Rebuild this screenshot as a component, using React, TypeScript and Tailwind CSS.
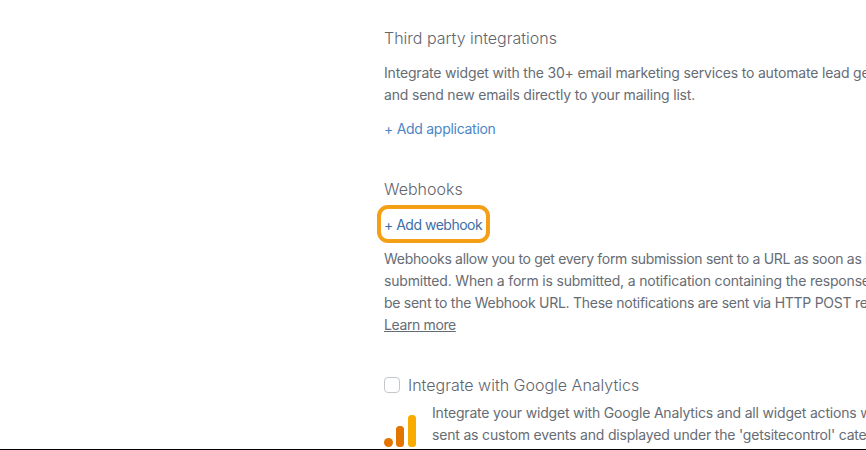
export default function App() {
  return (
    <div className="h-[450px] w-[866px] overflow-hidden bg-white flex flex-col font-['Inter',sans-serif] text-[#666c74] tracking-[-0.18px]">
      <div className="flex-1 overflow-hidden pl-[384px] pt-[28px]">
        {/* Third party integrations */}
        <h2 className="text-[16px] leading-[20px] text-[#5f656d] font-light tracking-normal">Third party integrations</h2>
        <p className="mt-[14px] text-[14px] leading-[22px] whitespace-nowrap">
          Integrate widget with the 30+ email marketing services to automate lead generation
          <br />
          and send new emails directly to your mailing list.
        </p>
        <a className="block mt-[12px] text-[14px] leading-[22px] text-[#4a86c8] tracking-[-0.28px]">+ Add application</a>

        {/* Webhooks */}
        <h2 className="mt-[39px] text-[16px] leading-[20px] text-[#5f656d] font-light tracking-normal">Webhooks</h2>
        <div className="mt-[6px] -ml-[7px] w-[113px] h-[38px] rounded-[11px] border-[4px] border-[#f59f16] flex items-center pl-[3px]">
          <a className="text-[14px] leading-[22px] text-[#3c6fa8] whitespace-nowrap tracking-[-0.5px] pt-px">+ Add webhook</a>
        </div>
        <p className="mt-[5px] text-[14px] leading-[22px] whitespace-nowrap">
          <span className="tracking-[-0.31px]">Webhooks allow you to get every form submission sent to a URL as soon as it is</span>
          <br />
          submitted. When a form is submitted, a notification containing the response data will
          <br />
          <span className="tracking-[-0.27px]">be sent to the Webhook URL. These notifications are sent via HTTP POST requests.</span>
          <br />
          <a className="underline tracking-[-0.38px]">Learn more</a>
        </p>

        {/* Google Analytics */}
        <label className="mt-[39px] flex items-center gap-[8px]">
          <span className="h-[16px] w-[16px] rounded-[4px] border border-[#c4c8cd] bg-white" />
          <span className="text-[16px] leading-[20px] text-[#5f656d] font-light tracking-normal">Integrate with Google Analytics</span>
        </label>
        <div className="mt-[7px] flex gap-[16px]">
          <svg className="mt-[13px] shrink-0" width="32" height="32" viewBox="0 0 32 32">
            <circle cx="4.5" cy="27.5" r="4.5" fill="#e37400" />
            <rect x="12" y="11" width="8" height="21" rx="3.5" fill="#e37400" />
            <rect x="24" y="0" width="8" height="32" rx="3.5" fill="#f9ab00" />
          </svg>
          <p className="text-[14px] leading-[22px] whitespace-nowrap">
            Integrate your widget with Google Analytics and all widget actions will be
            <br />
            sent as custom events and displayed under the 'getsitecontrol' category.
          </p>
        </div>
      </div>
      <div className="h-px shrink-0 bg-black" />
    </div>
  );
}
